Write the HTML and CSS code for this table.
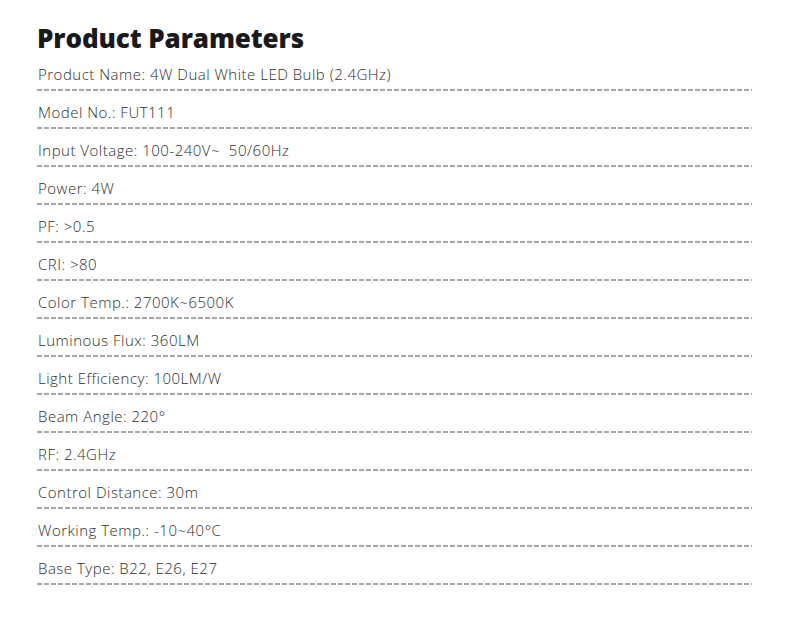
FILE: index.html
```html
<!DOCTYPE html>
<html>
<head>
<meta charset="utf-8">
<link rel="stylesheet" href="styles.css">
</head>
<body>
<div class="wrap">
  <h1 class="title">Product Parameters</h1>
  <ul class="params">
    <li class="row">Product Name: 4W Dual White LED Bulb (2.4GHz)</li>
    <li class="row">Model No.: FUT111</li>
    <li class="row">Input Voltage: 100-240V~&nbsp; 50/60Hz</li>
    <li class="row">Power: 4W</li>
    <li class="row">PF: &gt;0.5</li>
    <li class="row">CRI: &gt;80</li>
    <li class="row">Color Temp.: 2700K~6500K</li>
    <li class="row">Luminous Flux: 360LM</li>
    <li class="row">Light Efficiency: 100LM/W</li>
    <li class="row">Beam Angle: 220°</li>
    <li class="row">RF: 2.4GHz</li>
    <li class="row">Control Distance: 30m</li>
    <li class="row">Working Temp.: -10~40°C</li>
    <li class="row">Base Type: B22, E26, E27</li>
  </ul>
</div>
</body>
</html>
```
FILE: styles.css
```css
html, body {
  margin: 0;
  padding: 0;
  background: #fff;
}
.wrap {
  width: 715px;
  margin-left: 37px;
  font-family: "Open Sans", "Liberation Sans", sans-serif;
}
.title {
  margin: 23px 0 0 0;
  height: 30px;
  font-size: 26px;
  line-height: 30px;
  font-weight: 800;
  letter-spacing: -0.1px;
  color: #1a1a1a;
}
.params {
  list-style: none;
  margin: 0;
  padding: 0;
}
.row {
  padding: 11px 0 7px 1px;
  line-height: 20px;
  font-size: 15px;
  font-weight: 300;
  color: #2e2e2e;
  letter-spacing: 0.5px;
  background-image: repeating-linear-gradient(to right, #a6a6a6 0 5px, transparent 5px 7px);
  background-size: 100% 2px;
  background-repeat: no-repeat;
  background-position: left bottom;
}
```
